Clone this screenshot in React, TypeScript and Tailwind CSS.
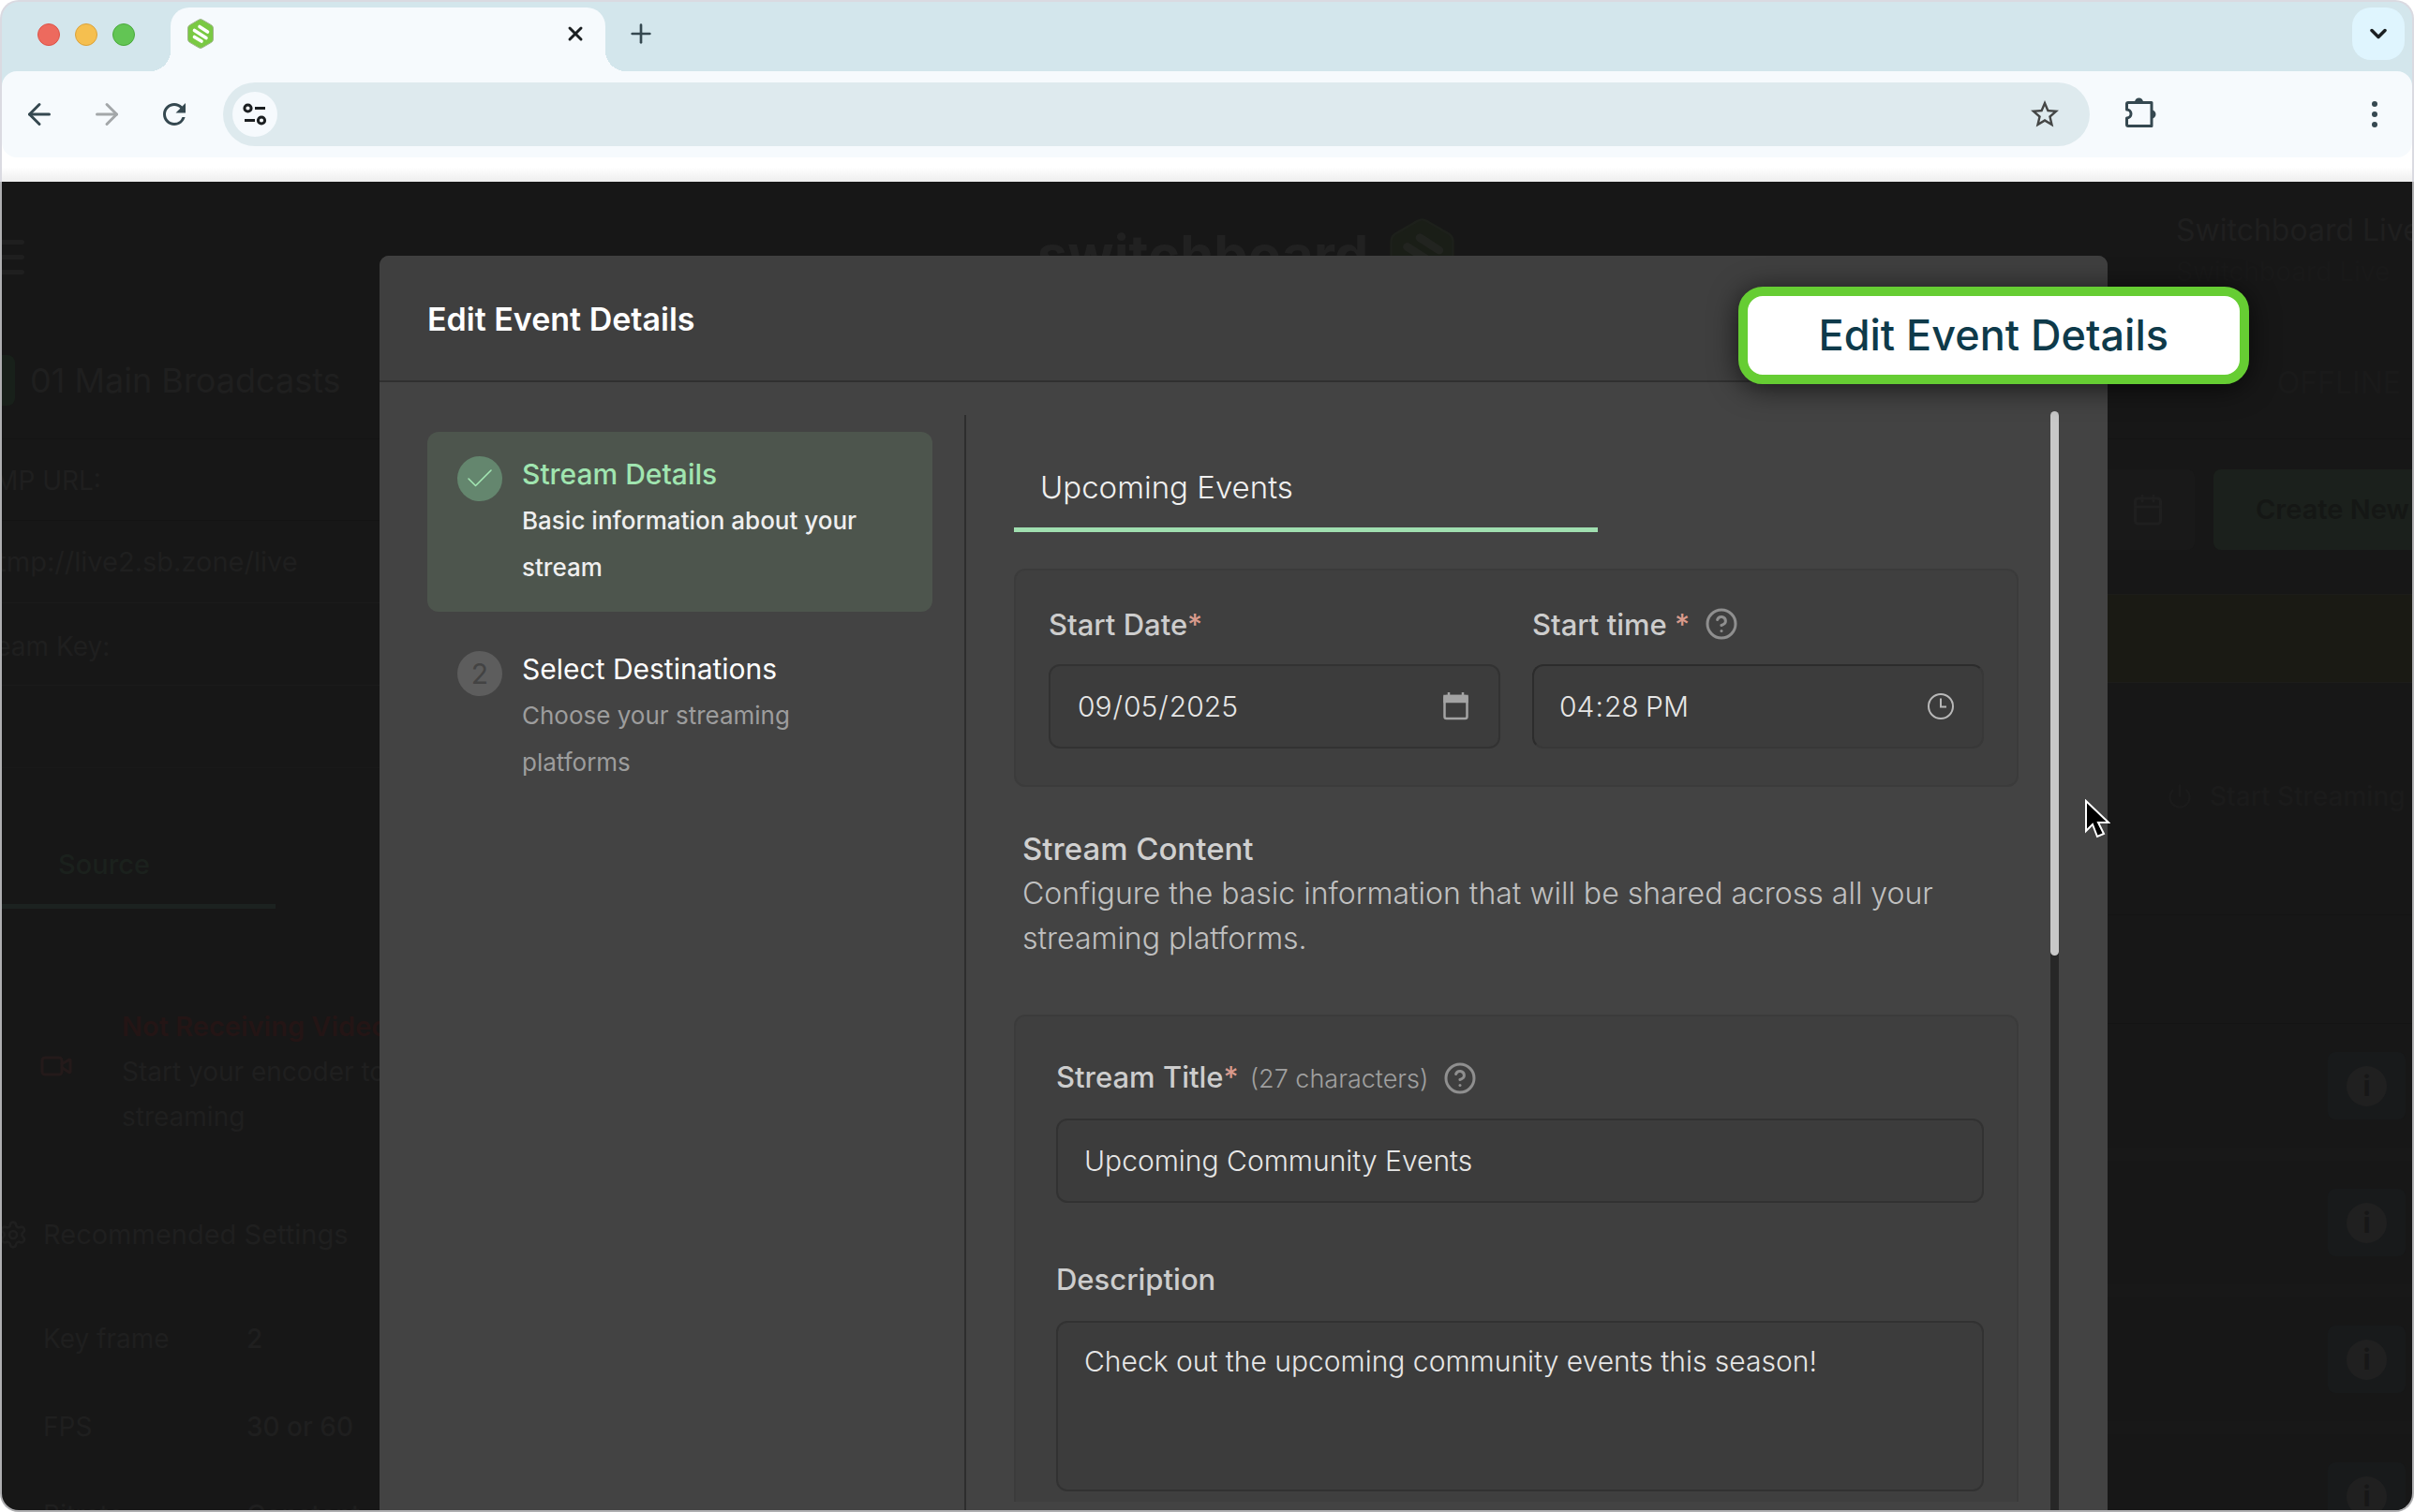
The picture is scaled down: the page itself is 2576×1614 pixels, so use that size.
import { type ReactNode } from 'react'
import { ArrowLeft, ArrowRight, Calendar, Check, ChevronDown, CircleHelp, Clock, Plus, Power, Settings, Video, X } from 'lucide-react'
import { MdOutlineStarBorder, MdRefresh } from 'react-icons/md'

const encoderSettings = [
  { name: 'Key frame', value: '2' },
  { name: 'FPS', value: '30 or 60' },
  { name: 'Bitrate', value: 'Constant' },
]

const destinationRows = ['a', 'b', 'c', 'd']

export default function App() {
  return (
    <div className="flex h-screen w-full flex-col bg-white font-['Inter',sans-serif]">
      <BrowserBar />
      <div className="relative min-h-0 flex-1 overflow-hidden rounded-b-[20px] border-2 border-t-0 border-[#afafb1] bg-[#171717]">
        <Dashboard />
        <div className="absolute inset-0 pt-[79px] pr-[325px] pl-[403px]">
          <EditDialog />
        </div>
        <div className="absolute top-[112px] right-[174px] rounded-[26px] border-10 border-[#66cd33] bg-white px-[76px] py-[18px] text-[45px] leading-12 font-medium text-[#0e3a4a] shadow-[0_4px_30px_rgba(0,0,0,0.65)]">
          Edit Event Details
        </div>
        <svg className="absolute top-[659px] right-[322px] h-[44px] w-[28px]" viewBox="0 0 28 44">
          <path d="M2 2v32l7-7 5 13 7-3-6-12h11z" fill="#000" stroke="#fff" strokeWidth="2" />
        </svg>
      </div>
    </div>
  )
}

function BrowserBar() {
  return (
    <header className="overflow-hidden rounded-t-[20px] border-2 border-b-0 border-[#dadae1] bg-[#d3e6ec]">
      <div className="flex h-[74px] pr-2 pl-[38px]">
        <div className="flex items-center gap-4 pb-1">
          <span className="size-6 rounded-full border border-[#dd5348] bg-[#ed6a5e]" />
          <span className="size-6 rounded-full border border-[#dba23a] bg-[#f5bf4f]" />
          <span className="size-6 rounded-full border border-[#4aa93c] bg-[#62c554]" />
        </div>
        <span className="ml-4 size-[22px] self-end bg-[radial-gradient(circle_at_0_0,transparent_22px,#f6fafd_22px)]" />
        <div className="mt-1.5 flex w-[464px] items-center justify-between rounded-t-[20px] bg-[#f6fafd] pr-5 pb-3 pl-[18px]">
          <Logo className="h-8 w-7" fill="#7ac943" bar="#fff" stroke="#9fb48c" />
          <button aria-label="Close tab" className="text-[#1b1f21]">
            <X className="size-6" strokeWidth={3} />
          </button>
        </div>
        <span className="size-[22px] self-end bg-[radial-gradient(circle_at_100%_0,transparent_22px,#f6fafd_22px)]" />
        <button aria-label="New tab" className="pb-1.5 text-[#354850]">
          <Plus className="size-8" strokeWidth={2} />
        </button>
        <button aria-label="Search tabs" className="mt-1.5 ml-auto flex size-14 items-center justify-center rounded-[20px] bg-[#dff5fe] text-[#1b1f21]">
          <ChevronDown className="size-7" strokeWidth={3} />
        </button>
      </div>

      <div className="bg-linear-to-b from-[#d3e6ec] from-50% to-white to-50%">
        <div className="flex h-[92px] items-center rounded-[16px] bg-[#f6fafd] pl-1 text-[#354850]">
          <NavButton label="Back">
            <ArrowLeft className="size-9" strokeWidth={2} />
          </NavButton>
          <NavButton label="Forward">
            <ArrowRight className="size-9 text-[#a3a7a9]" strokeWidth={2} />
          </NavButton>
          <NavButton label="Reload">
            <MdRefresh className="size-9" />
          </NavButton>
          <div className="ml-4 flex h-[68px] flex-1 items-center rounded-full bg-[#deeaee] pr-[30px] pl-2.5">
            <button aria-label="Site information" className="flex size-12 items-center justify-center rounded-full bg-[#f6fafd]">
              <svg className="h-6 w-[26px]" viewBox="0 0 26 24" fill="none" stroke="#1b1f21" strokeWidth="3">
                <circle cx="5.5" cy="5.5" r="3.6" />
                <path d="M13 5.5h11" />
                <circle cx="20" cy="18.5" r="3.6" />
                <path d="M2 18.5h11" />
              </svg>
            </button>
            <input aria-label="Address" className="h-full min-w-0 flex-1 bg-transparent px-4 text-[28px] outline-none" />
            <button aria-label="Bookmark" className="text-[#454746]">
              <MdOutlineStarBorder className="size-9" />
            </button>
          </div>
          <div className="flex w-[344px] items-center justify-between pr-[31px] pl-9">
            <button aria-label="Extensions" className="pb-1">
              <svg className="size-9" viewBox="0 0 36 36">
                <path
                  d="M5 7.500h25v25H5a1.500 1.500 0 0 1-1.500-1.500v-7a4.500 4.500 0 0 0 0-9V9A1.500 1.500 0 0 1 5 7.500z"
                  fill="none"
                  stroke="#354850"
                  strokeWidth="3"
                  strokeLinejoin="round"
                />
                <path d="M12 7a4.500 4.500 0 0 1 9 0zM30 15.500a4.500 4.500 0 0 1 0 9z" fill="#354850" />
              </svg>
            </button>
            <button aria-label="Browser menu" className="flex w-[18px] flex-col items-center gap-[5px]">
              <span className="size-1.5 rounded-full bg-[#354850]" />
              <span className="size-1.5 rounded-full bg-[#354850]" />
              <span className="size-1.5 rounded-full bg-[#354850]" />
            </button>
          </div>
        </div>
      </div>
      <div className="h-[26px] bg-linear-to-b from-white from-40% to-[#eeeeee]" />
    </header>
  )
}

function NavButton({ label, children }: { label: string; children: ReactNode }) {
  return (
    <button aria-label={label} className="flex w-[72px] items-center justify-center">
      {children}
    </button>
  )
}

function Logo({ className, fill, bar, stroke }: { className: string; fill: string; bar: string; stroke: string }) {
  return (
    <svg className={className} viewBox="0 0 28 32">
      <path d="M12 1.200a4 4 0 0 1 4 0l9.500 5.500a4 4 0 0 1 2 3.400v11.800a4 4 0 0 1-2 3.400L16 30.800a4 4 0 0 1-4 0l-9.500-5.500a4 4 0 0 1-2-3.400V10.100a4 4 0 0 1 2-3.400z" fill={fill} stroke={stroke} />
      <path d="M13 8.500l8.500 5.500M7.500 12.500l12.500 8M7.500 19.500l7.500 4.500" stroke={bar} strokeWidth="3.600" strokeLinecap="round" fill="none" />
    </svg>
  )
}

function Dashboard() {
  return (
    <div aria-hidden="true" className="h-full overflow-hidden text-[28px] leading-12 whitespace-nowrap text-[#1f1f1f]">
      <div className="grid h-[156px] grid-cols-[1104fr_445fr_1021fr] items-center">
        <div className="flex w-6 flex-col gap-[11px] pt-1">
          <span className="h-[5px] rounded-r bg-[#1f1f1f]" />
          <span className="h-[5px] rounded-r bg-[#1f1f1f]" />
          <span className="h-[5px] rounded-r bg-[#1f1f1f]" />
        </div>
        <div className="flex items-center justify-between">
          <span className="text-[58px] font-bold text-[#212121]">switchboard</span>
          <Logo className="h-[78px] w-[69px]" fill="#1a1e17" bar="#222420" stroke="#1d201b" />
        </div>
        <div className="w-[252px] justify-self-end pb-2 leading-[45px]">
          <p className="text-[32px]">Switchboard Live</p>
          <p className="text-[#191919]">Switchboard Live</p>
        </div>
      </div>

      <div className="flex justify-between">
        <section className="w-[403px] overflow-hidden">
          <div className="flex h-[118px] items-center gap-4 pb-1.5">
            <span className="h-[54px] w-3.5 rounded-r-lg bg-[#18201a]" />
            <h2 className="text-[36px]">01 Main Broadcasts</h2>
          </div>
          <div className="h-[88px] border-y border-[#141414] pt-5">
            <p className="-ml-11">RTMP URL:</p>
          </div>
          <div className="h-[88px] border-b border-[#1b1b1b] pt-5">
            <p className="-ml-4 text-[29px]">rtmp://live2.sb.zone/live</p>
          </div>
          <div className="h-[88px] border-b border-[#1b1b1b] pt-[22px]">
            <p className="-ml-11">Stream Key:</p>
          </div>
          <div className="h-[88px] border-b border-[#191919]" />
          <div className="flex h-[150px] w-[292px] items-end border-b-[5px] border-[#1c2220] pb-[18px] pl-[60px] text-[29px] font-medium text-[#1b211d]">Source</div>
          <div className="mt-[102px] flex items-center gap-[52px] pl-10">
            <Video className="mb-3 size-9 shrink-0 text-[#241a1a]" strokeWidth={2} />
            <div>
              <p className="text-[29px] font-semibold text-[#241515]">Not Receiving Video</p>
              <p>Start your encoder to start</p>
              <p>streaming</p>
            </div>
          </div>
          <div className="mt-[78px] flex items-center gap-4">
            <Settings className="-ml-1 size-8" strokeWidth={2} />
            <h3 className="text-[29px]">Recommended Settings</h3>
          </div>
          <dl className="mt-10">
            {encoderSettings.map((setting) => (
              <div key={setting.name} className="flex h-[94px] items-center pl-[44px]">
                <dt className="w-[217px]">{setting.name}</dt>
                <dd className="font-medium">{setting.value}</dd>
              </div>
            ))}
          </dl>
        </section>

        <section className="w-[325px] overflow-hidden">
          <p className="flex h-[118px] items-center justify-end pr-3 text-[32px] text-[#1a1a1a]">OFFLINE</p>
          <div className="flex h-[166px] gap-5 border-t border-[#141414] pt-8">
            <div className="flex h-[86px] w-[93px] items-center justify-center rounded-r-lg bg-[#191919] pr-2">
              <Calendar className="size-9" strokeWidth={2} />
            </div>
            <div className="flex h-[86px] flex-1 items-center rounded-l-lg bg-[#1b201c] pl-[45px] text-[29px] font-semibold text-[#151715]">Create New</div>
          </div>
          <div className="h-[95px] border-y border-[#1c1c1a] bg-[#1a1a14]" />
          <div className="flex h-[248px] items-center gap-[18px] border-b border-[#141414] pb-1.5 pl-[63px] font-medium text-[#1b1b1b]">
            <Power className="size-7" />
            Start Streaming
          </div>
          <div className="h-[116px] border-b border-[#141414]" />
          {destinationRows.map((row) => (
            <div key={row} className="flex h-[146px] justify-end border-b-[14px] border-[#181818] pt-[30px] pr-[7px]">
              <div className="flex h-[72px] w-[83px] items-center justify-center rounded-lg bg-[#181a1b]">
                <span className="flex size-[43px] items-center justify-center rounded-full bg-[#202020] text-[30px] font-bold text-[#171717]">i</span>
              </div>
            </div>
          ))}
        </section>
      </div>
    </div>
  )
}

function EditDialog() {
  return (
    <div role="dialog" aria-labelledby="dialog-title" className="flex h-full flex-col overflow-hidden rounded-t-[10px] bg-[#434343]">
      <div className="flex h-[135px] items-center border-b-2 border-[#303030] bg-[#3f3f3f] px-[51px] pt-0.5">
        <h1 id="dialog-title" className="text-[34px] font-semibold text-white">
          Edit Event Details
        </h1>
      </div>

      <div className="flex min-h-0 flex-1">
        <nav className="w-[624px] shrink-0 pt-[53px] pr-[34px] pl-[51px]">
          <Step
            active
            title="Stream Details"
            text="Basic information about your stream"
            marker={<Check className="size-9" strokeWidth={1} />}
          />
          <Step title="Select Destinations" text="Choose your streaming platforms" marker="2" />
        </nav>

        <div className="mt-[35px] flex min-w-0 flex-1 border-l-2 border-[#2e2e2e] pl-[51px]">
          <form className="mb-[9px] min-w-0 flex-1 overflow-hidden">
            <div className="flex h-[125px] w-[623px] items-center border-b-[5px] border-[#a0dfb0] pt-9 pl-7 text-[33px] font-light text-[#f0f0f0]">
              Upcoming Events
            </div>

            <div className="mt-[39px] grid grid-cols-2 gap-[34px] rounded-xl border-2 border-[#3b3b3b] bg-[#3f3f3f] px-[35px] pt-[34px] pb-[39px]">
              <div>
                <FieldLabel htmlFor="start-date">
                  Start Date<Required />
                </FieldLabel>
                <div className="mt-[18px] flex h-[90px] items-center justify-between rounded-xl border-2 border-[#323232] bg-[#3c3c3c] pr-8 pl-[28px]">
                  <input
                    id="start-date"
                    type="date"
                    defaultValue="2025-09-05"
                    className="bg-transparent text-[30px] font-light text-[#e6e6e6] outline-none [&::-webkit-calendar-picker-indicator]:hidden"
                  />
                  <svg className="h-[30px] w-[27px]" viewBox="0 0 27 30" fill="none" stroke="#a3a3a3" strokeWidth="2.500">
                    <rect x="1.500" y="4" width="24" height="24" rx="2" />
                    <path d="M1.500 4h24v6h-24z" fill="#a3a3a3" />
                    <path d="M6 0v5M21 0v5" />
                  </svg>
                </div>
              </div>
              <div>
                <FieldLabel htmlFor="start-time">
                  Start time <Required />
                  <CircleHelp className="mb-2 ml-4 inline size-9 text-[#8f8f8f]" strokeWidth={2} />
                </FieldLabel>
                <div className="mt-[18px] flex h-[90px] items-center justify-between rounded-xl border-2 border-[#383838] border-t-[#2c2c2c] border-l-[#2c2c2c] bg-[#3c3c3c] pr-[29px] pl-[26px]">
                  <input
                    id="start-time"
                    type="time"
                    defaultValue="16:28"
                    className="bg-transparent text-[30px] font-light text-[#e6e6e6] outline-none [&::-webkit-calendar-picker-indicator]:hidden"
                  />
                  <svg className="size-[30px]" viewBox="0 0 30 30" fill="none" stroke="#b8b8b8" strokeWidth="2">
                    <circle cx="15" cy="15" r="13" />
                    <path d="M15 6.500v9h6" />
                  </svg>
                </div>
              </div>
            </div>

            <div className="mt-[42px] pr-12 pl-[9px] leading-12">
              <h2 className="text-[33px] font-medium text-[#d0d0d0]">Stream Content</h2>
              <p className="text-[32px] font-light text-[#c0c0c0]">
                Configure the basic information that will be shared across all your streaming platforms.
              </p>
            </div>

            <div className="mt-[57px] rounded-xl border-2 border-[#3b3b3b] bg-[#3f3f3f] pt-[41px] pr-[35px] pb-10 pl-[43px]">
              <FieldLabel htmlFor="stream-title">
                Stream Title
                <Required />
                <span className="ml-3 text-[27px] font-light text-[#a0a0a0]">(27 characters)</span>
                <CircleHelp className="mb-1 ml-4 inline size-9 text-[#8f8f8f]" strokeWidth={2} />
              </FieldLabel>
              <input
                id="stream-title"
                type="text"
                defaultValue="Upcoming Community Events"
                className="mt-5 block h-[90px] w-full rounded-xl border-2 border-[#323232] bg-[#3c3c3c] px-7 text-[30px] font-light text-[#e6e6e6] outline-none"
              />
              <div className="mt-[58px]">
                <FieldLabel htmlFor="description">Description</FieldLabel>
              </div>
              <textarea
                id="description"
                defaultValue="Check out the upcoming community events this season!"
                className="mt-5 block h-[182px] w-full resize-none rounded-xl border-2 border-[#323232] bg-[#3c3c3c] px-7 py-[17px] text-[30px] leading-12 font-light text-[#e6e6e6] outline-none"
              />
            </div>
          </form>
          <div className="-mt-1 mr-[52px] ml-[34px] w-[9px] rounded-t-full bg-[#272727]">
            <div className="h-[581px] rounded-full bg-[#c8c8c8]" />
          </div>
        </div>
      </div>
    </div>
  )
}

function Step({ title, text, marker, active = false }: { title: string; text: string; marker: ReactNode; active?: boolean }) {
  return (
    <button className={`mb-4 flex w-full gap-[21px] rounded-xl px-8 pt-5 pb-[22px] text-left leading-[50px] ${active ? 'bg-[#4d554d]' : ''}`}>
      <span
        className={`mt-1.5 flex size-12 shrink-0 items-center justify-center rounded-full text-[30px] ${active ? 'bg-[#64866e] text-[#a4e8b4]' : 'bg-[#5d5d5d] text-[#434343]'}`}
      >
        {marker}
      </span>
      <span>
        <span className={`block text-[30px] ${active ? 'font-medium text-[#a0e5b0]' : 'text-white'}`}>{title}</span>
        <span className={`block text-[26px] ${active ? 'font-medium text-[#efefef]' : 'text-[#9d9d9d]'}`}>{text}</span>
      </span>
    </button>
  )
}

function FieldLabel({ htmlFor, children }: { htmlFor: string; children: ReactNode }) {
  return (
    <label htmlFor={htmlFor} className="block h-12 text-[31px] leading-12 font-medium text-[#cdcdcd]">
      {children}
    </label>
  )
}

function Required() {
  return <span className="text-[#d99a8c]">*</span>
}
